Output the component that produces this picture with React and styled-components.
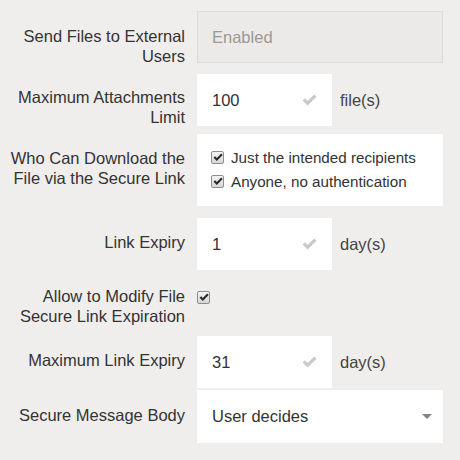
import React from "react";
import styled, { createGlobalStyle } from "styled-components";

const Global = createGlobalStyle`
  html, body { margin: 0; padding: 0; background: #efeeed; }
  body { font-family: "Liberation Sans", Arial, sans-serif; font-size: 16.5px; color: #333; }
`;

const Form = styled.div`
  width: 460px;
  height: 460px;
  padding-top: 11px;
  box-sizing: border-box;
  background: #efeeed;
`;

const Row = styled.div`
  display: flex;
  align-items: flex-start;
  gap: 12px;
  margin-top: ${(p) => p.$mt || 0}px;
`;

const Label = styled.div`
  width: 185px;
  flex: none;
  text-align: right;
  line-height: 19.5px;
  padding-top: ${(p) => (p.$pt ?? 15)}px;
  color: #333;
  box-sizing: border-box;
`;

const Box = styled.div`
  box-sizing: border-box;
  flex: none;
  width: ${(p) => (p.$wide ? 246 : 135)}px;
  height: ${(p) => p.$h || 52}px;
  background: #fff;
  display: flex;
  align-items: center;
  padding: 0 15px 0 15px;
`;

const Disabled = styled(Box)`
  background: #ebeae9;
  border: 1px solid #dcdbd9;
  color: #9b9894;
  padding-left: 14px;
`;

const Value = styled.span`
  flex: 1;
  color: #333;
`;

const Unit = styled.span`
  color: #444;
  align-self: center;
  margin-left: -4px;
`;

const CheckList = styled(Box)`
  flex-direction: column;
  align-items: flex-start;
  justify-content: flex-start;
  padding: 11px 10px 13px 14px;
`;

const CheckLine = styled.label`
  display: flex;
  align-items: center;
  height: 24px;
  gap: 7px;
  color: #333;
  font-size: 15.2px;
  white-space: nowrap;
`;

const CheckBoxMark = styled.span`
  width: 13px;
  height: 13px;
  box-sizing: border-box;
  border: 1px solid #8e8e8e;
  border-radius: 2px;
  background: linear-gradient(#f4f4f4, #d6d6d6);
  display: inline-flex;
  align-items: center;
  justify-content: center;
  flex: none;
  margin-top: ${(p) => p.$mt || 0}px;
`;

const Select = styled(Box)`
  justify-content: space-between;
  height: 53px;
  padding-right: 11px;
`;

const Triangle = styled.span`
  width: 0;
  height: 0;
  border-left: 5.5px solid transparent;
  border-right: 5.5px solid transparent;
  border-top: 5px solid #8a8478;
`;

const CheckIcon = () => (
  <svg width="15" height="12" viewBox="0 0 15 12">
    <path d="M0.5 6.5 L2.8 4.3 L5.6 7.1 L12.2 0.5 L14.5 2.8 L5.6 11.6 Z" fill="#c9c9c9" />
  </svg>
);

const TickSmall = () => (
  <svg width="10" height="9" viewBox="0 0 10 9">
    <path d="M0.6 4.8 L2.1 3.3 L3.8 5 L8.2 0.6 L9.7 2.1 L3.8 8 Z" fill="#2a2a2a" />
  </svg>
);

const Checkbox = ({ mt }) => (
  <CheckBoxMark $mt={mt}>
    <TickSmall />
  </CheckBoxMark>
);

export default function App() {
  return (
    <>
      <Global />
      <Form>
        <Row>
          <Label $pt={16}>Send Files to External Users</Label>
          <Disabled $wide>Enabled</Disabled>
        </Row>
        <Row $mt={8}>
          <Label $pt={14}>Maximum Attachments Limit</Label>
          <Box>
            <Value>100</Value>
            <CheckIcon />
          </Box>
          <Unit>file(s)</Unit>
        </Row>
        <Row $mt={7}>
          <Label>Who Can Download the File via the Secure Link</Label>
          <CheckList $wide $h={72}>
            <CheckLine>
              <Checkbox />
              Just the intended recipients
            </CheckLine>
            <CheckLine>
              <Checkbox />
              Anyone, no authentication
            </CheckLine>
          </CheckList>
        </Row>
        <Row $mt={12}>
          <Label>Link Expiry</Label>
          <Box>
            <Value>1</Value>
            <CheckIcon />
          </Box>
          <Unit>day(s)</Unit>
        </Row>
        <Row $mt={17}>
          <Label $pt={0}>Allow to Modify File Secure Link Expiration</Label>
          <Checkbox mt={4} />
        </Row>
        <Row $mt={10}>
          <Label>Maximum Link Expiry</Label>
          <Box>
            <Value>31</Value>
            <CheckIcon />
          </Box>
          <Unit>day(s)</Unit>
        </Row>
        <Row $mt={2}>
          <Label $pt={16}>Secure Message Body</Label>
          <Select $wide>
            <Value>User decides</Value>
            <Triangle />
          </Select>
        </Row>
      </Form>
    </>
  );
}
